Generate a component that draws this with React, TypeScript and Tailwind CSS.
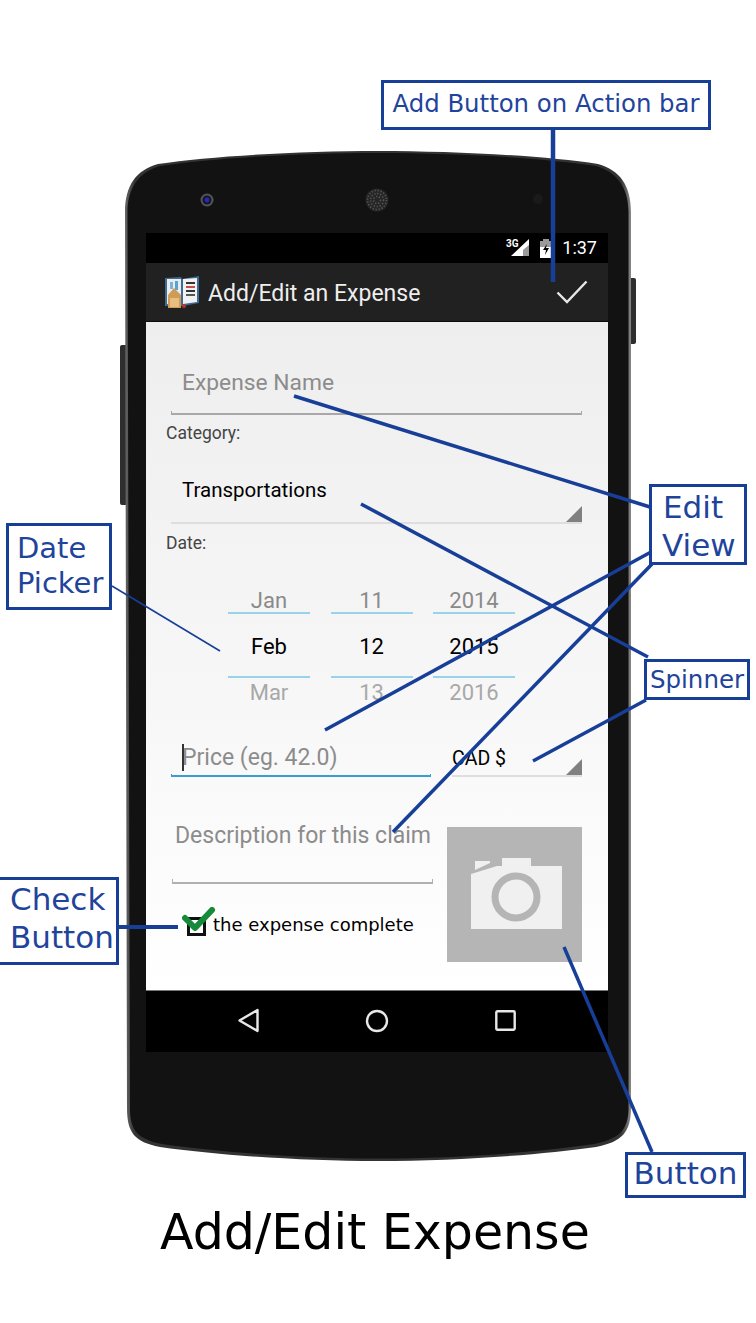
import React from "react";

const roboto = "font-['Roboto',sans-serif]";
const dejavu = "font-['DejaVu_Sans',sans-serif]";

function PhoneShell() {
  return (
    <svg className="absolute left-0 top-0" width="756" height="1323" viewBox="0 0 756 1323">
      <defs>
        <linearGradient id="edge" x1="0" x2="1" y1="0" y2="0">
          <stop offset="0" stopColor="#666" />
          <stop offset="0.02" stopColor="#333" />
          <stop offset="0.98" stopColor="#333" />
          <stop offset="1" stopColor="#888" />
        </linearGradient>
      </defs>
      <rect x="120" y="345" width="8" height="160" rx="2" fill="#2e2e2e" />
      <rect x="628" y="278" width="8" height="66" rx="2" fill="#2e2e2e" />
      <path
        d="M125 212 C125 186 136 170 158 164 C210 156 300 151 378 151 C456 151 546 156 598 164 C620 170 631 186 631 212 L631 1108 C631 1132 622 1142 596 1147 C540 1155 456 1161 378 1161 C300 1161 216 1155 160 1147 C134 1142 127 1132 127 1108 Z"
        fill="url(#edge)"
      />
      <path
        d="M127.5 212 C127.5 188 139 172 160 166 C212 158 300 153 378 153 C456 153 544 158 596 166 C617 172 628.5 188 628.5 212 L628.5 1108 C628.5 1130 619 1139 594 1144 C540 1152 456 1158.5 378 1158.5 C300 1158.5 218 1152 162 1144 C137 1139 130 1130 130 1108 Z"
        fill="#121212"
      />
      <circle cx="207" cy="200" r="6.5" fill="#555" />
      <circle cx="207" cy="200" r="4.5" fill="#15152e" />
      <circle cx="207" cy="200" r="2.4" fill="#2a2ab0" />
      <circle cx="377" cy="200" r="11.5" fill="#262626" />
      <circle cx="377" cy="200" r="9.5" fill="none" stroke="#555" strokeWidth="1.6" strokeDasharray="1.3 1.7" />
      <circle cx="377" cy="200" r="6.5" fill="none" stroke="#555" strokeWidth="1.6" strokeDasharray="1.3 1.7" />
      <circle cx="377" cy="200" r="3.5" fill="none" stroke="#555" strokeWidth="1.6" strokeDasharray="1.3 1.7" />
      <circle cx="538" cy="199" r="5" fill="#1a1a1a" />
    </svg>
  );
}

function BookIcon() {
  return (
    <svg width="36" height="34" viewBox="0 0 36 34" className="shrink-0">
      <path d="M1 3 L17 2 L18 4 L35 1 V28 L19 31 H1 Z" fill="#3d6b93" />
      <path d="M3 4 L17 4 V29 H3 Z" fill="#e9edf0" />
      <path d="M19 4 L33 3 V27 L19 29 Z" fill="#f1f1f1" />
      <rect x="6" y="7" width="3" height="7" fill="#7cb4d8" />
      <rect x="11" y="6" width="3" height="9" fill="#5aa2d0" />
      <rect x="22" y="7" width="9" height="2" fill="#333" />
      <rect x="22" y="11" width="9" height="2" fill="#c94b4b" />
      <rect x="22" y="15" width="9" height="2" fill="#333" />
      <rect x="22" y="19" width="9" height="2" fill="#555" />
      <path d="M4 33 V20 L10 13 L17 20 V33 Z" fill="#cf9b55" />
      <rect x="6" y="23" width="9" height="9" fill="#e8bd80" />
      <circle cx="20" cy="31" r="2" fill="#b53a2a" />
    </svg>
  );
}

function Triangle() {
  return (
    <svg width="16" height="16" viewBox="0 0 16 16" className="absolute bottom-0 right-0">
      <path d="M0 16 L16 0 V16 Z" fill="#808080" />
    </svg>
  );
}

function Ticks({ h, color }: { h: string; color: string }) {
  return <div className={`${h} ${color} border-x border-b-2`} />;
}

function PickerColumn({ a, b, c }: { a: string; b: string; c: string }) {
  return (
    <div className="flex w-[82px] flex-col items-center">
      <div className="flex h-[24px] items-center text-[22px] text-[#8a8a8a]">{a}</div>
      <div className="h-[2px] w-full bg-[#98d3ea]" />
      <div className="flex h-[62px] items-center pt-[3px] text-[22px] text-black">{b}</div>
      <div className="h-[2px] w-full bg-[#98d3ea]" />
      <div className="mt-[2px] flex h-[24px] items-center text-[22px] text-[#a8a8a8]">{c}</div>
    </div>
  );
}

function Screen() {
  return (
    <div className={`absolute left-[146px] top-[233px] flex h-[819px] w-[462px] flex-col ${roboto}`}>
      {/* status bar */}
      <div className="flex h-[30px] items-center justify-end bg-black pr-[11px]">
        <svg width="26" height="20" viewBox="0 0 26 20" className="mr-[11px]">
          <path d="M8 18 L26 18 L26 1 Z" fill="#fff" />
          <path d="M20 18 L26 18 L26 7 L20 12 Z" fill="#9a9a9a" />
          <text x="3" y="9" fontSize="10" fontWeight="700" fill="#fff" fontFamily="Roboto, sans-serif">3G</text>
        </svg>
        <svg width="12" height="19" viewBox="0 0 12 19" className="mr-[10px]">
          <rect x="3" y="0" width="6" height="2" fill="#9a9a9a" />
          <rect x="0" y="2" width="12" height="17" fill="#9a9a9a" />
          <rect x="0" y="8" width="12" height="11" fill="#fff" />
          <path d="M7 5 L3 11 H6 L5 16 L9 9 H6 Z" fill="#000" />
        </svg>
        <span className="text-[18px] leading-none text-white">1:37</span>
      </div>
      {/* action bar */}
      <div className="flex h-[59px] items-center border-b border-[#0c0c0c] bg-[#212121] pl-[18px] pr-[20px]">
        <BookIcon />
        <span className="ml-[8px] pt-[4px] text-[23px] text-[#eeeeee]">Add/Edit an Expense</span>
        <svg width="32" height="24" viewBox="0 0 32 24" className="ml-auto">
          <path d="M1.5 12.5 L11 22 L30.5 1.5" fill="none" stroke="#e8e8e8" strokeWidth="2.4" />
        </svg>
      </div>
      {/* content */}
      <div className="flex h-[668px] flex-col bg-gradient-to-b from-[#eeeeee] via-[#f6f6f6] to-white">
        <div className="ml-[25px] mr-[26px] mt-[44px]">
          <div className="flex h-[32px] items-center pl-[11px] pt-[2px] text-[22.8px] text-[#8c8c8c]">Expense Name</div>
          <div className="mt-[13px]">
            <Ticks h="h-[4px]" color="border-[#a8a8a8]" />
          </div>
        </div>
        <div className="mt-[8px] flex h-[20px] items-center pl-[20px] text-[17.5px] text-[#444]">Category:</div>
        <div className="relative ml-[25px] mr-[26px] mt-[33px] border-b-2 border-[#dedede]">
          <div className="flex h-[28px] items-center pl-[11px] text-[20.5px] text-black">Transportations</div>
          <div className="h-[18px]" />
          <Triangle />
        </div>
        <div className="mt-[9px] flex h-[20px] items-center pl-[20px] text-[17.5px] text-[#444]">Date:</div>
        <div className="ml-[82px] mt-[35px] flex gap-[20.5px]">
          <PickerColumn a="Jan" b="Feb" c="Mar" />
          <PickerColumn a="11" b="12" c="13" />
          <PickerColumn a="2014" b="2015" c="2016" />
        </div>
        <div className="ml-[25px] mr-[26px] mt-[37px] flex">
          <div className="relative w-[260px]">
            <div className="flex h-[33px] items-center pl-[11px] pt-[2px] text-[23px] text-[#8c8c8c]">Price (eg. 42.0)</div>
            <Ticks h="h-[3px]" color="border-[#3a9fcf]" />
            <div className="absolute left-[11px] top-[3px] h-[27px] w-[1.5px] bg-[#333]" />
          </div>
          <div className="relative ml-[21px] flex-1 border-b-2 border-[#dedede]">
            <div className="flex h-[34px] items-center pt-[2px] text-[19.5px] text-black">CAD $</div>
            <Triangle />
          </div>
        </div>
        <div className="ml-[26px] mt-[42px] flex">
          <div className="w-[261px]">
            <div className="flex h-[32px] items-center pl-[3px] pt-[2px] text-[23px] text-[#8c8c8c]">Description for this claim</div>
            <div className="mt-[28px]">
              <Ticks h="h-[5px]" color="border-[#b0b0b0]" />
            </div>
            <div className="relative mt-[30px] flex h-[24px] items-center pl-[15px]">
              <div className="h-[19px] w-[19px] border-[3px] border-[#111]" />
              <span className={`ml-[7px] -translate-y-[2px] text-[18px] text-black ${dejavu}`}>the expense complete</span>
              <svg width="34" height="28" viewBox="0 0 34 28" className="absolute left-[10px] top-[-7px]">
                <path d="M3 11 L13 21 L30 3" fill="none" stroke="#178a3a" strokeWidth="6" strokeLinecap="round" strokeLinejoin="round" />
              </svg>
            </div>
          </div>
          <div className="ml-[14px] mt-[8px] h-[135px] w-[135px] bg-[#b5b5b5]">
            <svg width="135" height="135" viewBox="0 0 135 135">
              <path d="M24 47 L50 39 H55 V31 H84 V39 H115 V102 H24 Z" fill="#f0f0f0" />
              <path d="M28 34 H43 V36 L28 43 Z" fill="#f0f0f0" />
              <circle cx="69" cy="70" r="21" fill="none" stroke="#b5b5b5" strokeWidth="7" />
            </svg>
          </div>
        </div>
      </div>
      {/* navigation bar */}
      <div className="flex h-[62px] items-center border-t border-[#777] bg-black pb-[2px] pl-[38px]">
        <div className="flex w-[128.5px] justify-center">
          <svg width="23" height="25" viewBox="0 0 23 25">
            <path d="M20.5 2 L2.5 12.5 L20.5 23 Z" fill="none" stroke="#e8e8e8" strokeWidth="2.4" strokeLinejoin="round" />
          </svg>
        </div>
        <div className="flex w-[128.5px] justify-center">
          <svg width="24" height="24" viewBox="0 0 24 24">
            <circle cx="12" cy="12" r="10" fill="none" stroke="#e8e8e8" strokeWidth="2.4" />
          </svg>
        </div>
        <div className="flex w-[128.5px] justify-center">
          <svg width="21" height="21" viewBox="0 0 21 21">
            <rect x="1.3" y="1.3" width="18.4" height="18.4" rx="1.2" fill="none" stroke="#e8e8e8" strokeWidth="2.4" />
          </svg>
        </div>
      </div>
    </div>
  );
}

function Lines() {
  const c = "#173f98";
  return (
    <svg className="pointer-events-none absolute left-0 top-0" width="756" height="1323" viewBox="0 0 756 1323">
      <g stroke={c} fill="none">
        <path d="M553 130 V282" strokeWidth="4.5" />
        <path d="M294 396 L650 507" strokeWidth="3.5" />
        <path d="M361 504 L648 657" strokeWidth="3.5" />
        <path d="M325 730 L651 552" strokeWidth="3.5" />
        <path d="M393 832 L652 564" strokeWidth="3.5" />
        <path d="M533 761 L646 700" strokeWidth="3.5" />
        <path d="M112 586 L220 651" strokeWidth="1.6" />
        <path d="M119 927 L178 927" strokeWidth="4" />
        <path d="M564 947 L652 1152" strokeWidth="3.5" />
      </g>
    </svg>
  );
}

function Label({ className, children }: { className: string; children: React.ReactNode }) {
  return (
    <div className={`absolute border-[3px] border-[#173f98] bg-white text-[#1f449c] ${dejavu} ${className}`}>
      {children}
    </div>
  );
}

export default function App() {
  return (
    <div className="relative h-[1323px] w-[756px] overflow-hidden bg-white">
      <PhoneShell />
      <Screen />
      <Lines />
      <Label className="left-[381px] top-[80px] flex h-[50px] w-[330px] items-center justify-center pb-[2px] text-[24.4px]">
        Add Button on Action bar
      </Label>
      <Label className="left-[6px] top-[523px] h-[87px] w-[106px] pl-[8px] pt-[5px] text-[29px] leading-[35px]">
        <div>Date</div>
        <div>Picker</div>
      </Label>
      <Label className="left-[649px] top-[484px] h-[81px] w-[98px] pl-[10px] pt-[1px] text-[31px] leading-[38px]">
        <div className="pl-[1px]">Edit</div>
        <div>View</div>
      </Label>
      <Label className="left-[644px] top-[659px] flex h-[41px] w-[106px] items-center justify-center pt-[2px] text-[24.5px]">
        Spinner
      </Label>
      <Label className="left-[-3px] top-[877px] h-[88px] w-[122px] pl-[10px] pt-0 text-[31px] leading-[38px]">
        <div>Check</div>
        <div>Button</div>
      </Label>
      <Label className="left-[625px] top-[1152px] flex h-[46px] w-[121px] items-center justify-center pb-[3px] text-[31px]">
        Button
      </Label>
      <div className={`absolute left-[160px] top-[1202px] text-[49px] leading-[62px] text-black ${dejavu}`}>
        Add/Edit Expense
      </div>
    </div>
  );
}
